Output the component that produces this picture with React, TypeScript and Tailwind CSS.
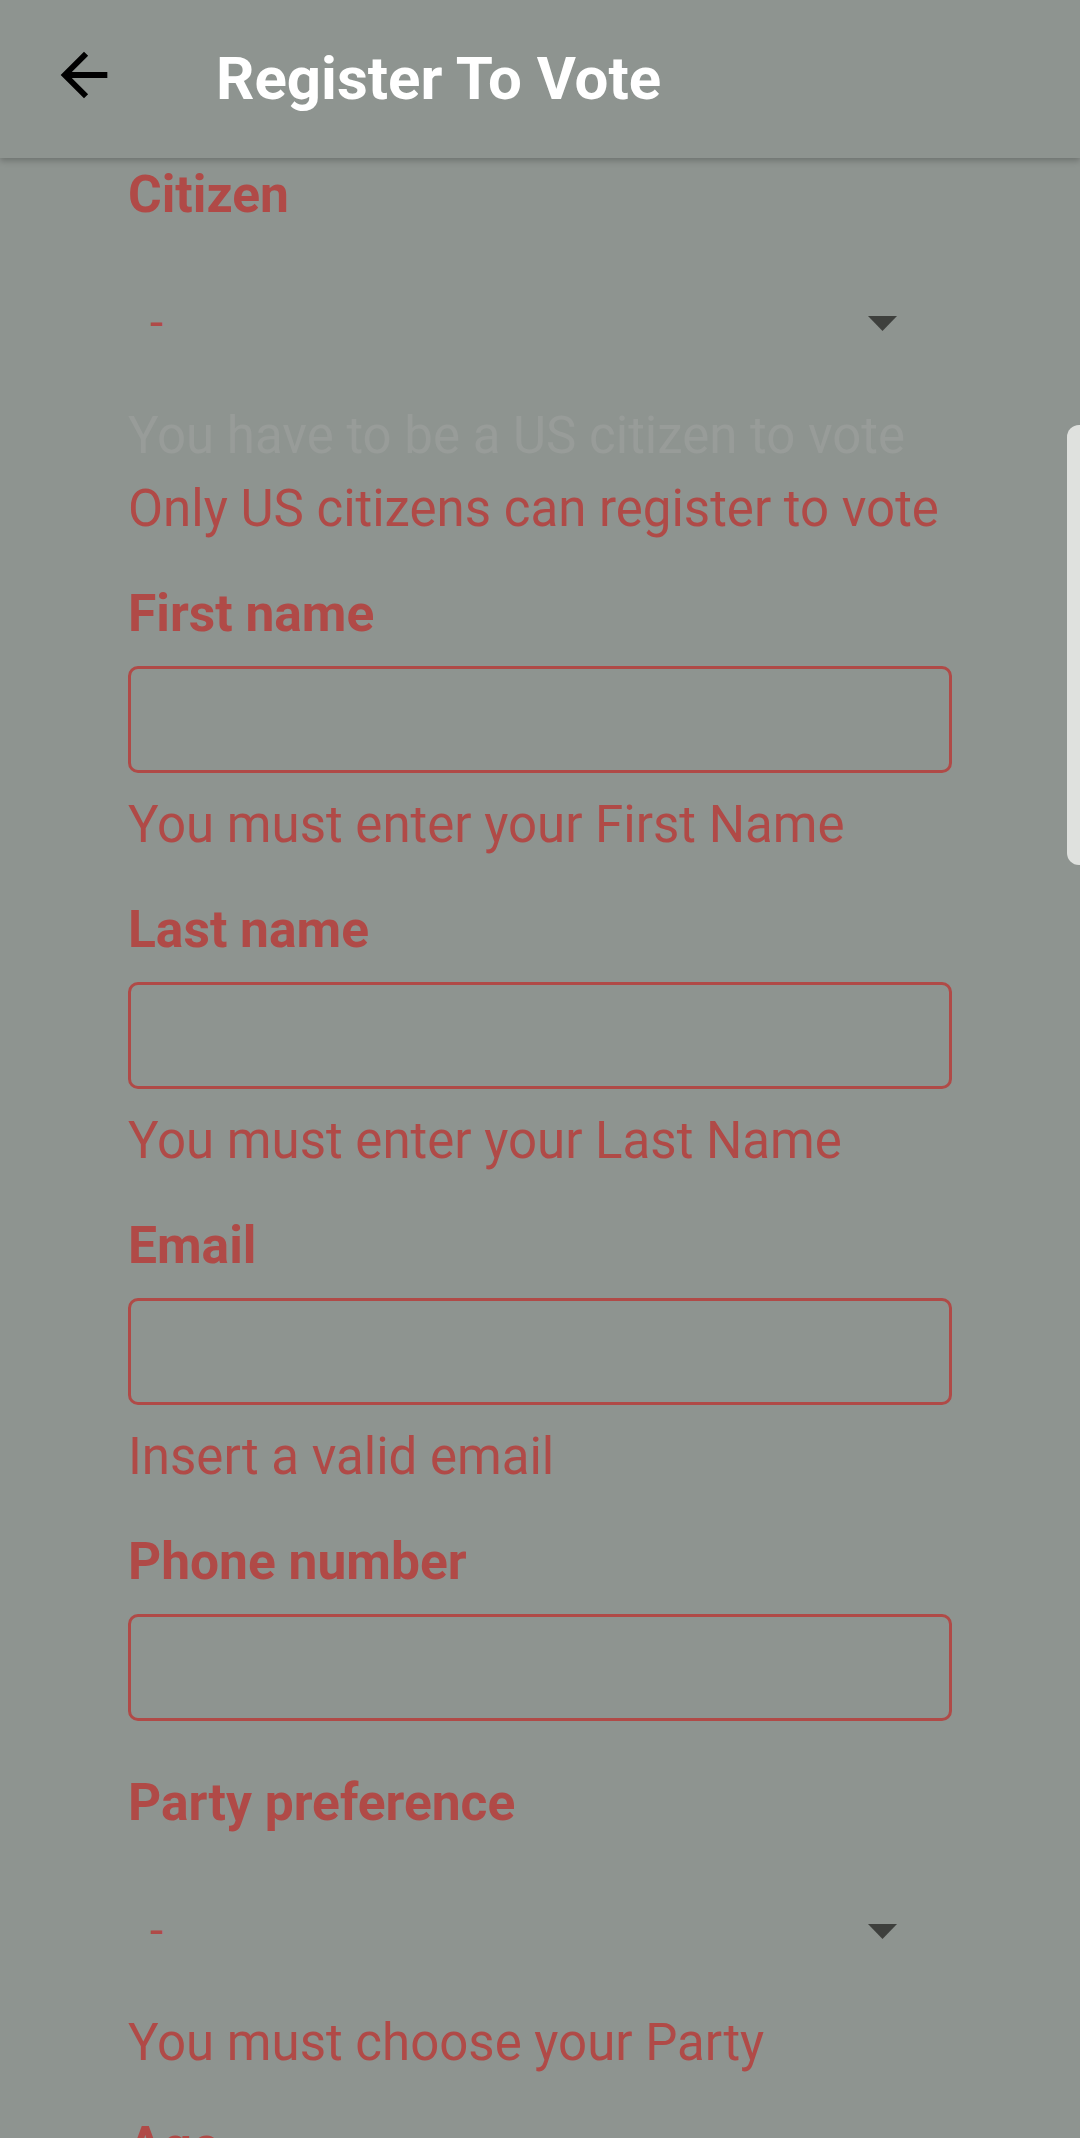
import React from "react";

const RED = "text-[#b04a47]";

function Label({ text, className = "" }: { text: string; className?: string }) {
  return <div className={`font-bold text-[51.5px] leading-[60px] ${RED} ${className}`}>{text}</div>;
}

function ErrorText({ text, className = "" }: { text: string; className?: string }) {
  return <div className={`text-[51px] leading-[60px] ${RED} ${className}`}>{text}</div>;
}

function Dropdown({ className = "" }: { className?: string }) {
  return (
    <div className={`mt-[38px] h-[120px] flex items-center justify-between pl-[22px] pr-[55px] ${className}`}>
      <span className={`text-[48px] leading-[60px] ${RED}`}>-</span>
      <svg width="29" height="15" viewBox="0 0 29 15">
        <path d="M0 0H29L14.5 15Z" fill="#3e403d" />
      </svg>
    </div>
  );
}

function Field({ label, error }: { label: string; error?: string }) {
  return (
    <>
      <Label text={label} className="mt-[45px]" />
      <div className="mt-[22px] h-[107px] rounded-[10px] border-[3px] border-[#b04a47]" />
      {error && <ErrorText text={error} className="mt-[22px]" />}
    </>
  );
}

export default function App() {
  return (
    <div
      className="relative w-[1080px] h-[2138px] overflow-hidden bg-[#8e9490]"
      style={{ fontFamily: "Roboto, 'Liberation Sans', sans-serif" }}
    >
      <header className="relative z-10 h-[158px] flex items-center pl-[49px] bg-[#8e9490] shadow-[0_3px_6px_rgba(0,0,0,0.22)]">
        <svg width="70" height="70" viewBox="0 0 24 24" className="-mt-[9px]">
          <path d="M20 11H7.83l5.59-5.59L12 4l-8 8 8 8 1.41-1.41L7.83 13H20v-2z" fill="#000" />
        </svg>
        <h1 className="ml-[97px] text-white font-bold text-[60px] leading-[70px]">Register To Vote</h1>
      </header>

      <main className="px-[128px] flex flex-col">
        <Label text="Citizen" className="mt-[7px]" />
        <Dropdown />
        <div className="mt-[23px] text-[51px] leading-[60px] text-[#989c99]">You have to be a US citizen to vote</div>
        <ErrorText text="Only US citizens can register to vote" className="mt-[13px]" />

        <Field label="First name" error="You must enter your First Name" />
        <Field label="Last name" error="You must enter your Last Name" />
        <Field label="Email" error="Insert a valid email" />
        <Field label="Phone number" />

        <Label text="Party preference" className="mt-[52px]" />
        <Dropdown />
        <ErrorText text="You must choose your Party" className="mt-[22px]" />

        <Label text="Age" className="mt-[43px]" />
      </main>

      <div className="absolute right-0 top-[425px] w-[13px] h-[440px] rounded-l-[12px] bg-[#dfe1de]" />
    </div>
  );
}
